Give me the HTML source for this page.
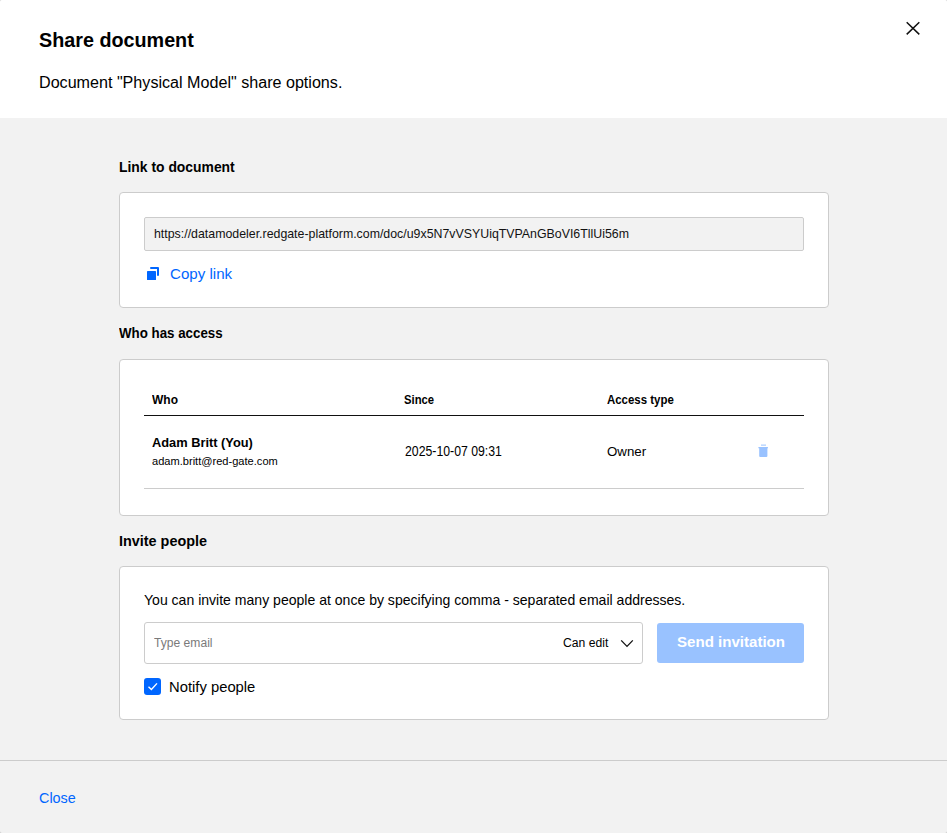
<!DOCTYPE html>
<html lang="en">
<head>
<meta charset="utf-8">
<title>Share document</title>
<style>
*{box-sizing:border-box;margin:0;padding:0}
html,body{width:947px;height:833px;overflow:hidden}
html{background:#c8c8c8}
.dlg{position:absolute;left:0;top:0;width:947px;height:833px;background:#f2f2f2;border-radius:2px;overflow:hidden}
body{font-family:"Liberation Sans","DejaVu Sans",sans-serif;color:#000;position:relative}
.a,.t{position:absolute}
.t{white-space:nowrap;line-height:1;transform-origin:0 0}
.header{left:0;top:0;width:947px;height:118px;background:#fff}
.card{left:119px;width:710px;background:#fff;border:1px solid #ccc;border-radius:4px}
</style>
</head>
<body>
<div class="dlg">
<div class="a header"></div>
<div class="t" id="title" style="left:39.00px;top:31.00px;font-size:19.5px;color:#000;transform:scaleX(1.0130);font-weight:bold">Share document</div>
<div class="t" id="sub" style="left:39.00px;top:75.00px;font-size:16px;color:#000;transform:scaleX(1.0069)">Document "Physical Model" share options.</div>
<svg class="a" style="left:900px;top:15px" width="26" height="26" viewBox="900 15 26 26"><path d="M906.7 22.2 L919.3 34.4 M919.3 22.2 L906.7 34.4" stroke="#111" stroke-width="1.5" fill="none"/></svg>

<div class="t" id="h1" style="left:119.00px;top:159.00px;font-size:15px;color:#000;transform:scaleX(0.9259);font-weight:bold">Link to document</div>
<div class="a card" style="top:192px;height:116px"></div>
<div class="a" style="left:144px;top:217px;width:660px;height:34px;background:#f2f2f2;border:1px solid #ccc;border-radius:2px"></div>
<div class="t" id="url" style="left:154.00px;top:227.00px;font-size:13.5px;color:#111;transform:scaleX(0.9152)">https://datamodeler.redgate-platform.com/doc/u9x5N7vVSYUiqTVPAnGBoVI6TllUi56m</div>
<svg class="a" style="left:144px;top:264px" width="18" height="18" viewBox="144 264 18 18"><rect x="147" y="271" width="9" height="9" rx=".6" fill="#0066ff"/><path d="M151 268 H158 V275" stroke="#0066ff" stroke-width="2" fill="none" stroke-linejoin="round" stroke-linecap="round"/></svg>
<div class="t" id="copy" style="left:170.00px;top:266.00px;font-size:15px;color:#0066ff;transform:scaleX(1.0070)">Copy link</div>

<div class="t" id="h2" style="left:119.00px;top:325.00px;font-size:15px;color:#000;transform:scaleX(0.8881);font-weight:bold">Who has access</div>
<div class="a card" style="top:359px;height:157px"></div>
<div class="t" id="th1" style="left:152.00px;top:394.00px;font-size:12.5px;color:#000;transform:scaleX(0.9584);font-weight:bold">Who</div>
<div class="t" id="th2" style="left:404.00px;top:394.00px;font-size:12.5px;color:#000;transform:scaleX(0.9018);font-weight:bold">Since</div>
<div class="t" id="th3" style="left:607.00px;top:394.00px;font-size:12.5px;color:#000;transform:scaleX(0.9148);font-weight:bold">Access type</div>
<div class="a" style="left:144px;top:415px;width:660px;height:1px;background:#111"></div>
<div class="t" id="name" style="left:152.00px;top:437.00px;font-size:12.5px;color:#000;transform:scaleX(1.0252);font-weight:bold">Adam Britt (You)</div>
<div class="t" id="email" style="left:152.00px;top:456.00px;font-size:11px;color:#000;transform:scaleX(1.0071)">adam.britt@red-gate.com</div>
<div class="t" id="date" style="left:405.00px;top:444.00px;font-size:14px;color:#000;transform:scaleX(0.8769)">2025-10-07 09:31</div>
<div class="t" id="owner" style="left:607.00px;top:445.00px;font-size:13px;color:#000;transform:scaleX(1.0219)">Owner</div>
<svg class="a" style="left:755px;top:441px" width="16" height="18" viewBox="755 441 16 18"><rect x="761" y="444.6" width="5" height="1" fill="#99c2ff"/><rect x="758.3" y="447" width="9.7" height="1.3" rx=".5" fill="#99c2ff"/><path d="M759.2 447.5 H767.4 V456 a1 1 0 0 1 -1 1 H760.2 a1 1 0 0 1 -1 -1 Z" fill="#99c2ff"/></svg>
<div class="a" style="left:144px;top:488px;width:660px;height:1px;background:#ccc"></div>

<div class="t" id="h3" style="left:119.00px;top:533.00px;font-size:15px;color:#000;transform:scaleX(0.9599);font-weight:bold">Invite people</div>
<div class="a card" style="top:566px;height:154px"></div>
<div class="t" id="info" style="left:144.00px;top:592.00px;font-size:15px;color:#000;transform:scaleX(0.9363)">You can invite many people at once by specifying comma - separated email addresses.</div>
<div class="a" style="left:144px;top:622px;width:499px;height:42px;background:#fff;border:1px solid #ccc;border-radius:3px"></div>
<div class="t" id="ph" style="left:154.00px;top:637.00px;font-size:12.5px;color:#7a7a7a;transform:scaleX(0.9682)">Type email</div>
<div class="t" id="canedit" style="left:563.00px;top:637.00px;font-size:12px;color:#000;transform:scaleX(1.0141)">Can edit</div>
<svg class="a" style="left:617px;top:635px" width="20" height="16" viewBox="617 635 20 16"><path d="M621.2 640.4 L627 646.4 L632.8 640.4" stroke="#111" stroke-width="1.3" fill="none"/></svg>
<div class="a" style="left:657px;top:623px;width:147px;height:40px;background:#99c2ff;border-radius:3px"></div>
<div class="t" id="send" style="left:677.00px;top:634.00px;font-size:15px;color:#fff;transform:scaleX(1.0047);font-weight:bold">Send invitation</div>
<div class="a" style="left:144px;top:678px;width:17px;height:17px;background:#0066ff;border-radius:3px"></div>
<svg class="a" style="left:144px;top:678px" width="17" height="17" viewBox="144 678 17 17"><path d="M148.5 686.8 L151.4 689.5 L157 683.4" stroke="#fff" stroke-width="1.4" fill="none"/></svg>
<div class="t" id="notify" style="left:169.00px;top:679.00px;font-size:15px;color:#000;transform:scaleX(0.9862)">Notify people</div>

<div class="a" style="left:0;top:760px;width:947px;height:1px;background:#ccc"></div>
<div class="t" id="close" style="left:39.00px;top:790.00px;font-size:15px;color:#0066ff;transform:scaleX(0.9604)">Close</div>
</div>
</body>
</html>
